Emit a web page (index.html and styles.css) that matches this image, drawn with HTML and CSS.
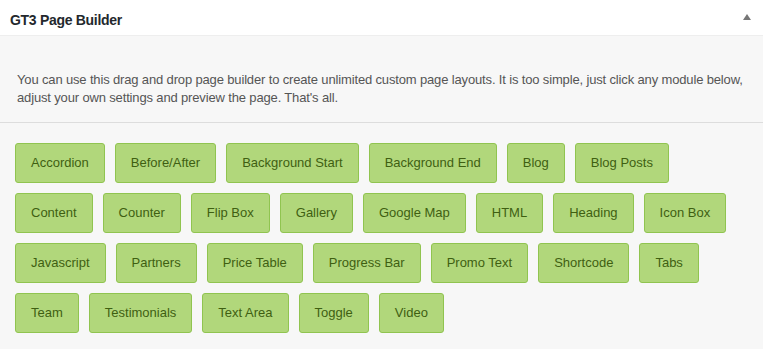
FILE: index.html
```html
<!DOCTYPE html>
<html lang="en">
<head>
    <meta charset="UTF-8">
    <title>GT3 Page Builder</title>
    <link rel="stylesheet" href="styles.css">
</head>
<body>

    <div class="postbox">
        <div class="postbox-header">
            <h2 class="postbox-title">GT3 Page Builder</h2>
            <span class="toggle-arrow"></span>
        </div>

        <div class="builder-intro">
            <p>You can use this drag and drop page builder to create unlimited custom page layouts. It is too simple, just click any module below, adjust your own settings and preview the page. That's all.</p>
        </div>

        <div class="module-list">
            <a class="module-btn">Accordion</a>
            <a class="module-btn">Before/After</a>
            <a class="module-btn">Background Start</a>
            <a class="module-btn">Background End</a>
            <a class="module-btn">Blog</a>
            <a class="module-btn">Blog Posts</a>
            <a class="module-btn">Content</a>
            <a class="module-btn">Counter</a>
            <a class="module-btn">Flip Box</a>
            <a class="module-btn">Gallery</a>
            <a class="module-btn">Google Map</a>
            <a class="module-btn">HTML</a>
            <a class="module-btn">Heading</a>
            <a class="module-btn">Icon Box</a>
            <a class="module-btn">Javascript</a>
            <a class="module-btn">Partners</a>
            <a class="module-btn">Price Table</a>
            <a class="module-btn">Progress Bar</a>
            <a class="module-btn">Promo Text</a>
            <a class="module-btn">Shortcode</a>
            <a class="module-btn">Tabs</a>
            <a class="module-btn">Team</a>
            <a class="module-btn">Testimonials</a>
            <a class="module-btn">Text Area</a>
            <a class="module-btn">Toggle</a>
            <a class="module-btn">Video</a>
        </div>
    </div>

</body>
</html>
```

FILE: styles.css
```css
body {
    margin: 0;
    font-family: "Liberation Sans", Arial, sans-serif;
    background-color: #f7f7f7;
}

.postbox {
    background-color: #f7f7f7;
    min-height: 349px;
}

.postbox-header {
    display: flex;
    justify-content: space-between;
    align-items: flex-start;
    height: 25px;
    padding: 10px 12px 0 10px;
    background-color: #fff;
    border-bottom: 1px solid #eee;
}

.postbox-title {
    margin: 0;
    font-size: 14px;
    line-height: 20px;
    font-weight: bold;
    letter-spacing: -0.3px;
    color: #23282d;
}

.toggle-arrow {
    width: 0;
    height: 0;
    margin-top: 4px;
    border-left: 4px solid transparent;
    border-right: 4px solid transparent;
    border-bottom: 6px solid #777;
}

.builder-intro {
    padding: 35px 14px 15px 17px;
    border-bottom: 1px solid #ddd;
}

.builder-intro p {
    margin: 0;
    font-size: 13px;
    line-height: 18px;
    letter-spacing: -0.15px;
    color: #555;
}

.module-list {
    display: flex;
    flex-wrap: wrap;
    gap: 10px;
    padding: 20px 15px;
}

.module-btn {
    display: block;
    padding: 10px 15px;
    font-size: 13px;
    line-height: 18px;
    color: #3f5f12;
    background-color: #b1d77b;
    border: 1px solid #90c450;
    border-radius: 3px;
    cursor: pointer;
}
```
